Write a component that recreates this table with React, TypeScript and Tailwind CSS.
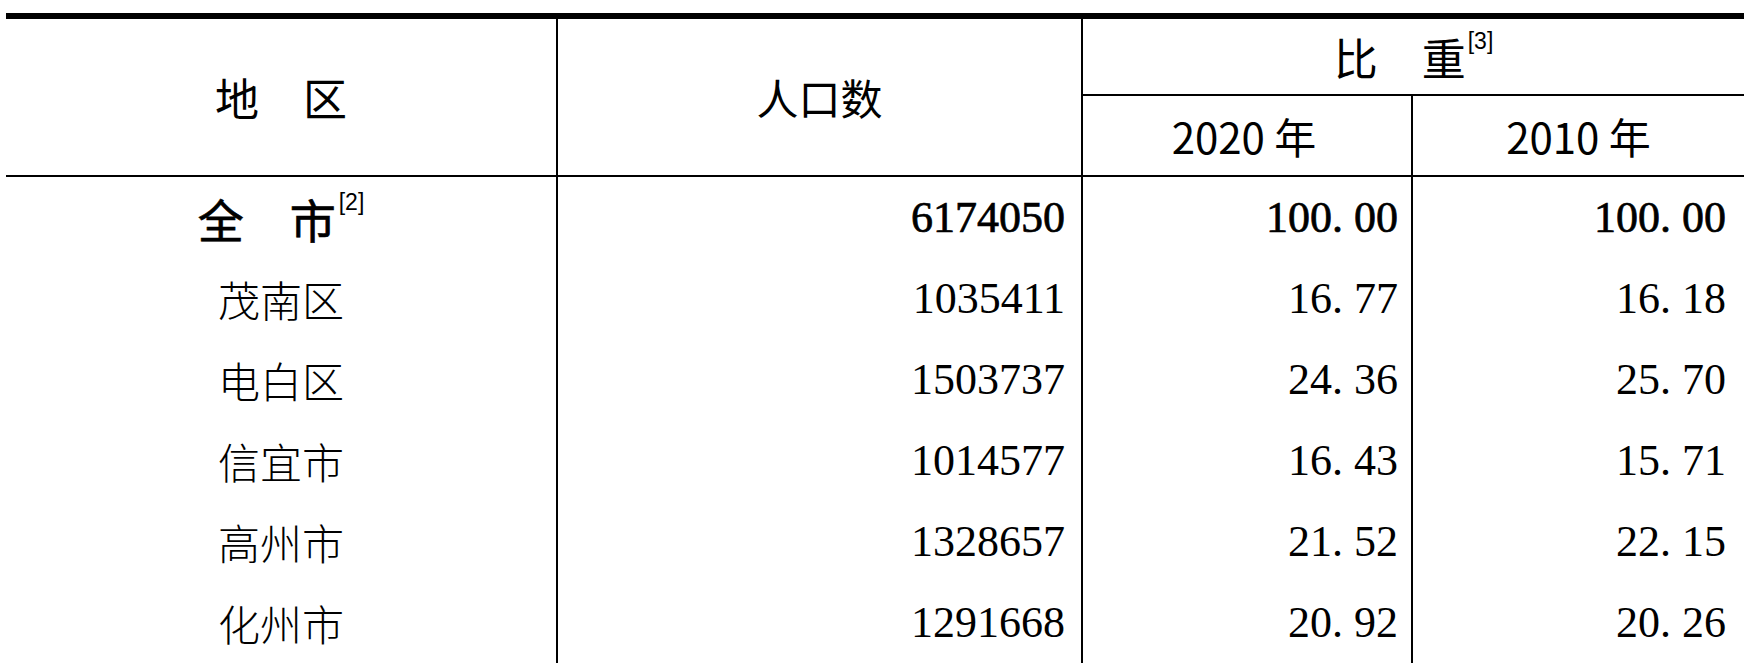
import React from "react";

interface Row {
  name: string;
  pop: string;
  y2020: string;
  y2010: string;
}

const rows: Row[] = [
  { name: "茂南区", pop: "1035411", y2020: "16.77", y2010: "16.18" },
  { name: "电白区", pop: "1503737", y2020: "24.36", y2010: "25.70" },
  { name: "信宜市", pop: "1014577", y2020: "16.43", y2010: "15.71" },
  { name: "高州市", pop: "1328657", y2020: "21.52", y2010: "22.15" },
  { name: "化州市", pop: "1291668", y2020: "20.92", y2010: "20.26" },
];

const sans = "font-['Noto_Sans_CJK_SC',sans-serif]";
const serifNum = "font-['Liberation_Serif','Noto_Sans_CJK_SC',serif]";
const sup = "font-['Liberation_Sans_Narrow','Liberation_Sans',sans-serif] text-[23px] leading-none";
const heavy = "[-webkit-text-stroke:0.7px_black]";

// SimSun style decimals: the point takes a full half-width cell
function Num({ value }: { value: string }) {
  const [a, b] = value.split(".");
  return (
    <>
      {a}
      <span className="inline-block w-[0.5em]">.</span>
      {b}
    </>
  );
}

function DataRow({ row, bold = false }: { row: Row; bold?: boolean }) {
  const num = `${serifNum} text-[44px] leading-none ${bold ? heavy : ""}`;
  return (
    <div className="grid grid-cols-[550px_525px_330px_333px] h-[81px]">
      <div className="flex items-center justify-center">
        {bold ? (
          <div className="flex items-start">
            <span className={`${sans} text-[46px] leading-none ${heavy}`}>{row.name}</span>
            <span className={`${sup} mt-[-4px] ml-[3px]`}>[2]</span>
          </div>
        ) : (
          <span className={`${sans} text-[42px] leading-none font-light`}>{row.name}</span>
        )}
      </div>
      <div className={`flex items-center justify-end border-l-2 border-black pr-[16px] ${num}`}>{row.pop}</div>
      <div className={`flex items-center justify-end border-l-2 border-black pr-[13px] ${num}`}>
        <Num value={row.y2020} />
      </div>
      <div className={`flex items-center justify-end border-l-2 border-black pr-[18px] ${num}`}>
        <Num value={row.y2010} />
      </div>
    </div>
  );
}

export default function App() {
  return (
    <div className="min-h-screen bg-white text-black pt-[13px] pl-[6px] overflow-hidden">
      <div className="w-[1738px] border-t-[6px] border-black">
        {/* header */}
        <div className="grid grid-cols-[550px_525px_663px] h-[158px] border-b-2 border-black">
          <div className={`flex items-center justify-center ${sans} text-[44px] leading-none`}>地　区</div>
          <div className={`flex items-center justify-center border-l-2 border-black ${sans} text-[42px] leading-none`}>
            人口数
          </div>
          <div className="flex flex-col border-l-2 border-black">
            <div className="h-[77px] border-b-2 border-black flex items-center justify-center">
              <div className="flex items-start">
                <span className={`${sans} text-[44px] leading-none`}>比　重</span>
                <span className={`${sup} mt-[-5px] ml-[2px]`}>[3]</span>
              </div>
            </div>
            <div className="flex-1 grid grid-cols-[328px_333px]">
              <div className={`flex items-center justify-center ${sans} text-[42px] leading-none pr-[6px]`}>2020 年</div>
              <div className={`flex items-center justify-center border-l-2 border-black ${sans} text-[42px] leading-none`}>
                2010 年
              </div>
            </div>
          </div>
        </div>

        <DataRow row={{ name: "全　市", pop: "6174050", y2020: "100.00", y2010: "100.00" }} bold />

        {rows.map((r) => (
          <DataRow key={r.name} row={r} />
        ))}
      </div>
    </div>
  );
}
